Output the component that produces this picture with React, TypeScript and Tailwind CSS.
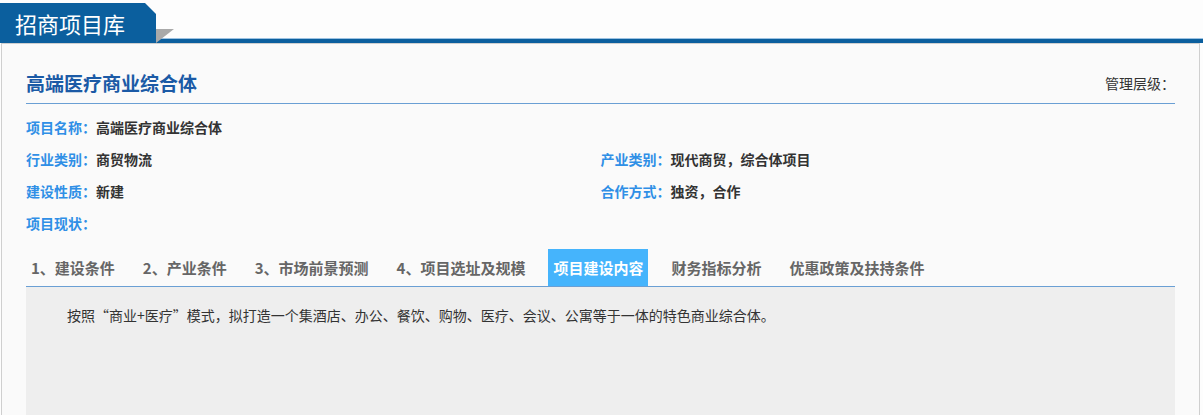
import React from "react";

const font = { fontFamily: '"Noto Sans CJK SC", "Noto Sans", sans-serif' };

function Field({ label, value }: { label: string; value?: string }) {
  return (
    <div className="flex h-[32px] items-center text-[14px] font-bold leading-[32px]">
      <span className="text-[#2f8fe6]">{label}：</span>
      <span className="text-[#333333]">{value}</span>
    </div>
  );
}

const tabs = [
  "1、建设条件",
  "2、产业条件",
  "3、市场前景预测",
  "4、项目选址及规模",
  "项目建设内容",
  "财务指标分析",
  "优惠政策及扶持条件",
];

export default function App() {
  return (
    <div className="h-[415px] w-[1203px] overflow-hidden bg-[#fdfdfd]" style={font}>
      {/* header */}
      <div className="flex h-[43px] items-end">
        <div
          className="flex h-[40px] w-[156px] items-center bg-[#0b5f9e] pl-[15px] text-[22px] leading-none text-white"
          style={{ clipPath: "polygon(0 0, 145px 0, 156px 11px, 156px 40px, 0 40px)" }}
        >
          招商项目库
        </div>
        <div className="relative flex h-[14px] flex-1 items-end">
          <div className="h-[5px] w-full border-t border-[#9cc2e2] bg-[#0b5f9e]" />
          <svg className="absolute left-0 top-0" width="18" height="14" viewBox="0 0 18 14">
            <polygon points="0,0 18,0 0,14" fill="#a9a9a9" />
          </svg>
        </div>
      </div>

      {/* box */}
      <div className="ml-[1px] h-[372px] w-[1199px] border-x border-t border-[#cfcfcf] bg-[#fafafa] px-[24px] pt-[25px]">
        <div className="flex h-[28px] items-center justify-between">
          <div className="text-[19px] font-bold leading-[28px] text-[#1b5aa6]">高端医疗商业综合体</div>
          <div className="text-[14px] leading-[28px] text-[#333333]">管理层级：</div>
        </div>
        <div className="mt-[6px] h-px bg-[#6a9fd4]" />

        <div className="mt-[7px] grid grid-cols-2">
          <Field label="项目名称" value="高端医疗商业综合体" />
          <div />
          <Field label="行业类别" value="商贸物流" />
          <Field label="产业类别" value="现代商贸，综合体项目" />
          <Field label="建设性质" value="新建" />
          <Field label="合作方式" value="独资，合作" />
          <Field label="项目现状" />
        </div>

        <div className="mt-[10px] flex h-[38px] items-stretch gap-[18px] border-b border-[#6a9fd4]">
          {tabs.map((t, i) => (
            <div
              key={t}
              className={
                "flex h-[37px] items-center px-[5px] text-[15px] font-bold leading-none " +
                (i === 4 ? "bg-[#45b4fc] text-white" : "text-[#666666]")
              }
            >
              {t}
            </div>
          ))}
        </div>

        <div className="h-[200px] bg-[#eeeeee] px-[13px] pt-[18px]">
          <p className="indent-[28px] text-[14px] leading-[20px] text-[#333333]">
            按照“商业+医疗”模式，拟打造一个集酒店、办公、餐饮、购物、医疗、会议、公寓等于一体的特色商业综合体。
          </p>
        </div>
      </div>
    </div>
  );
}
